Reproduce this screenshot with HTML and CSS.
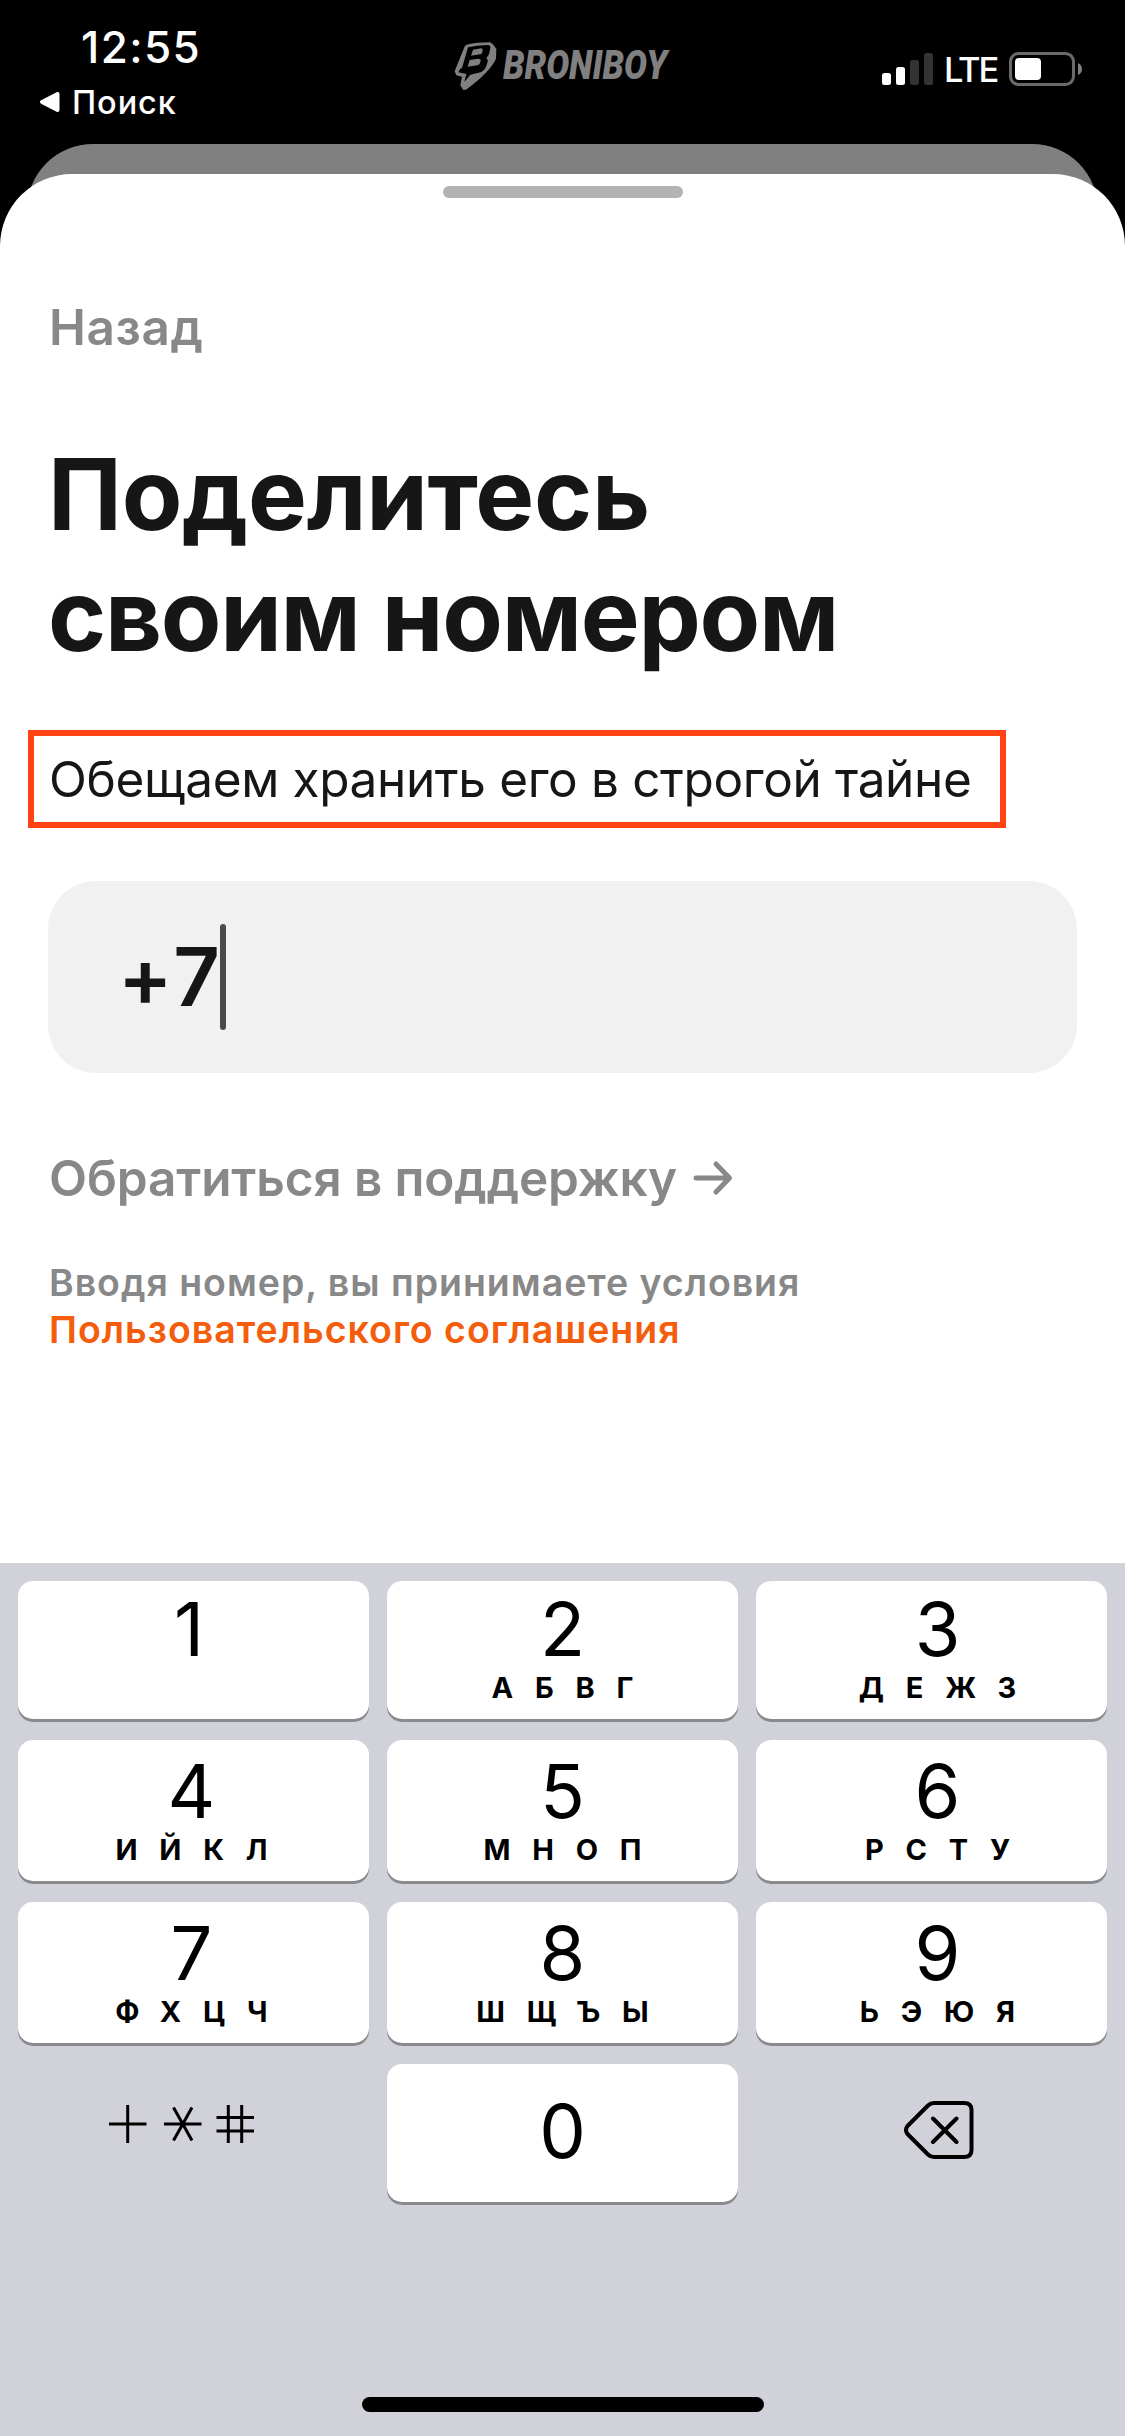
FILE: index.html
```
<!DOCTYPE html>
<html lang="ru">
<head>
<meta charset="utf-8">
<title>Broniboy</title>
<link rel="stylesheet" href="styles.css">
</head>
<body>
<div class="screen">
  <header class="status">
    <div class="status-left">
      <div class="time">12:55</div>
      <div class="return">
        <svg class="return-icon" width="22" height="22" viewBox="0 0 22 22"><path d="M3 11 L18.5 3 V19 Z" fill="#fff" stroke="#fff" stroke-width="4" stroke-linejoin="round"/></svg>
        <span>Поиск</span>
      </div>
    </div>
    <div class="brand">
      <svg width="56" height="60" viewBox="0 0 168 180">
        <path d="M50 26 Q80 19 120 19 L128 24 L139 38 L138 68 Q120 108 48 161 L40 162 L31 148 L36 122 L19 118 L14 106 L42 36 Q44 28 50 26 Z" fill="#808080"/>
        <path d="M54 34 Q80 28 114 27 Q122 28 121 36 L117 54 Q115 60 109 66 Q115 70 113 78 L108 92 Q103 106 86 110 L61 116 L43 138 L49 114 L25 109 L30 99 L36 96 Z" fill="#000"/>
        <path d="M69 41 L94 37 Q99 38 98 44 L96 51 Q94 55 90 55 L63 59 Z M59 72 L84 68 Q93 68 92 75 L89 83 Q87 87 82 88 L53 92 Z" fill="#808080"/>
      </svg>
      <span class="brand-name">BRONIBOY</span>
    </div>
    <div class="indicators">
      <svg width="52" height="34" viewBox="0 0 52 34">
        <g fill="#fff"><rect y="21" width="9" height="12" rx="2.5"/><rect x="14" y="15" width="9" height="18" rx="2.5"/></g>
        <g fill="#333"><rect x="28" y="8" width="9" height="25" rx="2.5"/><rect x="42" y="1" width="9" height="32" rx="2.5"/></g>
      </svg>
      <span class="lte">LTE</span>
      <svg class="battery" width="74" height="34" viewBox="0 0 74 34">
        <rect x="1.5" y="1.5" width="63" height="31" rx="8" fill="none" stroke="#6a6a6a" stroke-width="3"/>
        <rect x="6" y="6" width="26" height="22" rx="4" fill="#fff"/>
        <path d="M69 11 Q73 13 73 17 T69 23 Z" fill="#808080"/>
      </svg>
    </div>
  </header>
  <div class="sheet-behind"></div>
  <main class="sheet">
    <div class="grabber"></div>
    <div class="back">Назад</div>
    <h1 class="title"><span class="title-top">Поделитесь</span><br>своим номером</h1>
    <p class="promise">Обещаем хранить его в строгой тайне</p>
    <div class="phone"><span>+7</span><i class="caret"></i></div>
    <div class="support"><span>Обратиться в поддержку</span>
      <svg width="40" height="36" viewBox="0 0 40 36" fill="none" stroke="#888" stroke-width="5" stroke-linecap="round" stroke-linejoin="round"><path d="M3 18 H36 M23 4 L36.500 18 L23 32"/></svg>
    </div>
    <p class="terms">Вводя номер, вы принимаете условия<br><a class="terms-link">Пользовательского соглашения</a></p>
  </main>
  <section class="keyboard">
    <div class="keys">
      <div class="key first"><b class="one">1</b><small></small></div>
      <div class="key"><b>2</b><small>АБВГ</small></div>
      <div class="key last"><b>3</b><small>ДЕЖЗ</small></div>
      <div class="key first"><b>4</b><small>ИЙКЛ</small></div>
      <div class="key"><b>5</b><small>МНОП</small></div>
      <div class="key last"><b>6</b><small>РСТУ</small></div>
      <div class="key first"><b>7</b><small>ФХЦЧ</small></div>
      <div class="key"><b>8</b><small>ШЩЪЫ</small></div>
      <div class="key last"><b>9</b><small>ЬЭЮЯ</small></div>
      <div class="plain symbols">
        <svg width="146" height="38" viewBox="0 0 146 38" fill="none" stroke="#000" stroke-width="3"><path d="M0 19 H37.5 M18.7 0 V38 M55 19 H92.500 M64.500 2.500 L83 35.500 M83 2.500 L64.500 35.500 M107.500 12.500 H145 M107.500 26 H145 M119.300 0 V38 M132.700 0 V38"/></svg>
      </div>
      <div class="key zero"><b>0</b></div>
      <div class="plain erase">
        <svg width="70" height="60" viewBox="0 0 70 60" fill="none" stroke="#000" stroke-width="4" stroke-linecap="round" stroke-linejoin="round"><path d="M30 3 H60 Q67.500 3 67.500 10 V50 Q67.500 57 60 57 H30 Q26.500 57 24 54.500 L3.500 34 Q0.500 30 3.500 26 L24 5.500 Q26.500 3 30 3 Z M29 18.500 L52.500 42 M52.500 18.500 L29 42"/></svg>
      </div>
    </div>
    <div class="home"></div>
  </section>
</div>
</body>
</html>
```
FILE: styles.css
```
* { box-sizing: border-box; }
body { margin: 0; background: #000; font-family: Inter, "Liberation Sans", sans-serif; }
.screen { width: 1125px; height: 2436px; display: flex; flex-direction: column; overflow: hidden; }
svg { display: block; flex: none; }

.status { height: 144px; flex: none; display: flex; align-items: flex-start; color: #fff; }
.status-left { width: 450px; padding-top: 21.5px; }
.time { padding-left: 81px; font-size: 44px; line-height: 50px; font-weight: 550; letter-spacing: 1.4px; }
.return { display: flex; align-items: center; gap: 11px; margin-top: 11px; padding-left: 39px; font-size: 32.5px; line-height: 40px; font-weight: 500; letter-spacing: .9px; }
.return-icon { margin-top: -2px; }
.brand { width: 432px; display: flex; padding-top: 36px; }
.brand-name { margin: 4px 0 0 -3px; font: italic 900 41px/50px Roboto, sans-serif; color: #808080; transform: scaleX(.836); transform-origin: 0 0; }
.indicators { display: flex; padding-top: 52px; }
.lte { width: 64px; margin: -1px 0 0 10px; font-size: 34.5px; line-height: 38px; font-weight: 500; letter-spacing: -2.2px; }
.battery { margin-left: 1px; }

.sheet-behind { flex: none; height: 102px; margin: 0 27px; background: #808080; border-radius: 66px 66px 0 0; }
.sheet { flex: none; height: 1389px; margin-top: -72px; padding: 12px 48px 0; background: #fff; border-radius: 72px 72px 0 0; color: #161617; }
.grabber { width: 240px; height: 12px; margin: 0 auto; border-radius: 6px; background: #b3b3b3; }
.back { margin-top: 99px; padding-left: 1px; font-size: 49.5px; line-height: 60px; font-weight: 600; letter-spacing: .6px; color: #888; }
.title { margin: 76.5px 0 0; font-size: 99px; line-height: 121px; font-weight: 700; letter-spacing: -1.28px; }
.title-top { letter-spacing: -.28px; }
.promise { width: 978px; height: 98px; margin: 54.5px 0 0 -20px; padding-left: 15px; border: 6px solid #ff4314; font-size: 49.5px; line-height: 86px; letter-spacing: -.36px; white-space: nowrap; }
.phone { height: 192px; margin-top: 53px; padding-left: 70px; display: flex; align-items: center; background: #f1f1f1; border-radius: 48px; font-size: 81px; font-weight: 600; letter-spacing: 3px; }
.caret { width: 6px; height: 106px; margin-left: -3px; border-radius: 3px; background: #4a4a4a; }
.support { margin-top: 75px; padding-left: 1px; display: flex; align-items: center; gap: 16px; font-size: 49.5px; line-height: 60px; font-weight: 600; letter-spacing: -.12px; color: #888; }
.terms { margin: 52px 0 0; padding-left: 1px; font-size: 37.5px; line-height: 46.5px; font-weight: 600; letter-spacing: .96px; color: #888; }
.terms-link { color: #f45d0c; letter-spacing: 1px; }

.keyboard { flex: 1; padding: 18px 18px 0; background: #d1d1d9; color: #000; }
.keys { display: grid; grid-template-columns: repeat(3, 351px); grid-template-rows: 138px 141px 141px 138px; gap: 21px 18px; }
.key { display: flex; flex-direction: column; justify-content: flex-end; align-items: center; gap: 14px; padding-bottom: 16.5px; border-radius: 15px; background: #fff; box-shadow: 0 3px 0 #898a8d; }
.key b { font-size: 74px; line-height: 60px; font-weight: 400; }
.key .one { padding-right: 5px; }
.key small { height: 30px; padding-left: 21.800px; font-size: 29px; line-height: 30px; font-weight: 700; letter-spacing: 21.800px; }
.first { padding-right: 4px; }
.last { padding-left: 12px; }
.zero { padding-bottom: 41.5px; }
.symbols { padding: 41px 0 0 91px; }
.erase { padding: 36px 0 0 148px; }
.home { width: 402px; height: 15px; margin: 195px auto 0; border-radius: 8px; background: #000; }
```
